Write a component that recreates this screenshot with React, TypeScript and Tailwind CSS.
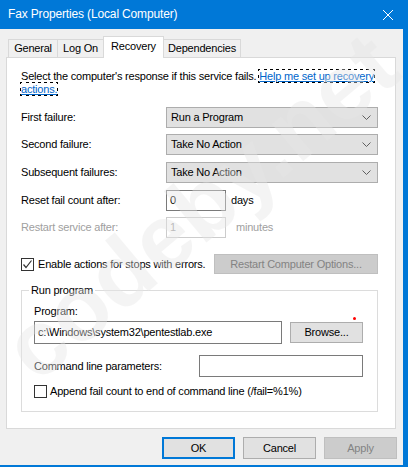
import React from "react";

const Chevron = () => (
  <svg width="9" height="5" viewBox="0 0 9 5" className="text-[#5f5f5f]">
    <path d="M0.5 0.5 L4.5 4.5 L8.5 0.5" fill="none" stroke="currentColor" strokeWidth="1" />
  </svg>
);

const Combo = ({ value }: { value: string }) => (
  <div className="flex h-[21px] w-[212px] items-center justify-between border border-[#adadad] bg-[#e1e1e1] pl-[4px] pr-[6px]">
    <span>{value}</span>
    <Chevron />
  </div>
);

const CheckBox = ({ checked }: { checked?: boolean }) => (
  <div className="flex h-[13px] w-[13px] shrink-0 items-center justify-center border border-[#333333] bg-white">
    {checked && (
      <svg width="11" height="11" viewBox="0 0 11 11">
        <path d="M1.5 5.5 L4 8.5 L9.5 1.5" fill="none" stroke="#333333" strokeWidth="1.2" />
      </svg>
    )}
  </div>
);

const Tab = ({ label, w, active }: { label: string; w: string; active?: boolean }) => (
  <div
    className={
      active
        ? `-ml-px flex h-[22px] items-start justify-center border border-b-0 border-[#d9d9d9] bg-white pt-[3px] ${w}`
        : `-ml-px mb-px flex h-[18px] items-center justify-center border border-b-0 border-[#d9d9d9] bg-[#f0f0f0] ${w}`
    }
  >
    {label}
  </div>
);

export default function App() {
  return (
    <div className="relative h-[467px] w-[408px] overflow-hidden border-b-2 border-r-[5px] border-[#0078d7] bg-[#f0f0f0] font-['Liberation_Sans',Arial,sans-serif] text-[11px] leading-[13px] tracking-[-0.2px] text-black">
      {/* title bar */}
      <div className="flex h-[29px] items-center justify-between bg-[#0078d7] pl-[8px] pr-[9px] text-white">
        <span className="text-[12px] tracking-[-0.15px]">Fax Properties (Local Computer)</span>
        <svg width="12" height="12" viewBox="0 0 12 12">
          <path d="M1 1 L11 11 M11 1 L1 11" stroke="white" strokeWidth="1" />
        </svg>
      </div>

      <div className="px-[6px]">
        {/* tabs */}
        <div className="relative z-10 mt-[7px] flex h-[22px] items-end pl-[3px]">
          <Tab label="General" w="w-[50px]" />
          <Tab label="Log On" w="w-[47px]" />
          <Tab label="Recovery" w="w-[61px]" active />
          <Tab label="Dependencies" w="w-[78px]" />
        </div>

        {/* panel */}
        <div className="-mt-px h-[372px] w-[390px] border border-[#d9d9d9] bg-white pl-[14px] pt-[12px]">
          <p className="whitespace-nowrap">
            Select the computer's response if this service fails.{" "}
            <span className="text-[#0066cc] underline outline-1 outline-dotted outline-black">
              Help me set up recovery
              <br />
              actions.
            </span>
          </p>

          <div className="mt-[11px] flex items-center">
            <span className="w-[145px]">First failure:</span>
            <Combo value="Run a Program" />
          </div>
          <div className="mt-[6px] flex items-center">
            <span className="w-[145px]">Second failure:</span>
            <Combo value="Take No Action" />
          </div>
          <div className="mt-[7px] flex items-center">
            <span className="w-[145px]">Subsequent failures:</span>
            <Combo value="Take No Action" />
          </div>
          <div className="mt-[7px] flex items-center">
            <span className="w-[145px]">Reset fail count after:</span>
            <div className="flex h-[21px] w-[60px] items-center border border-[#7a7a7a] bg-white pl-[3px]">0</div>
            <span className="ml-[5px]">days</span>
          </div>
          <div className="mt-[6px] flex items-center text-[#a0a0a0]">
            <span className="w-[145px]">Restart service after:</span>
            <div className="flex h-[21px] w-[60px] items-center border border-[#cccccc] bg-white pl-[3px]">1</div>
            <span className="ml-[10px]">minutes</span>
          </div>

          <div className="mt-[16px] flex w-[357px] items-center justify-between">
            <div className="flex items-center gap-[4px]">
              <CheckBox checked />
              <span>Enable actions for stops with errors.</span>
            </div>
            <div className="flex h-[20px] w-[164px] items-center justify-center border border-[#bfbfbf] bg-[#cccccc] text-[#838383]">
              Restart Computer Options...
            </div>
          </div>

          <fieldset className="mt-[10px] w-[357px] border border-[#dcdcdc] pb-[13px]">
            <legend className="ml-[7px] px-[2px]">Run program</legend>
            <div className="pl-[12px]">
              <div className="mt-[8px]">Program:</div>
              <div className="mt-[3px] flex items-center">
                <div className="flex h-[23px] w-[248px] items-center border border-[#7a7a7a] bg-white pl-[3px]">
                  c:\Windows\system32\pentestlab.exe
                </div>
                <div className="ml-[8px] flex h-[21px] w-[73px] items-center justify-center border border-[#adadad] bg-[#e1e1e1]">
                  Browse...
                </div>
              </div>
              <div className="mt-[11px] flex items-center">
                <span className="w-[165px]">Command line parameters:</span>
                <div className="h-[22px] w-[164px] border border-[#7a7a7a] bg-white" />
              </div>
              <div className="mt-[8px] flex items-center gap-[3px]">
                <CheckBox />
                <span>Append fail count to end of command line (/fail=%1%)</span>
              </div>
            </div>
          </fieldset>
        </div>

        {/* dialog buttons */}
        <div className="mt-[8px] flex justify-end gap-[8px]">
          <div className="flex h-[22px] w-[73px] items-center justify-center border-2 border-[#0078d7] bg-[#e1e1e1]">OK</div>
          <div className="flex h-[22px] w-[73px] items-center justify-center border border-[#adadad] bg-[#e1e1e1]">Cancel</div>
          <div className="flex h-[22px] w-[73px] items-center justify-center border border-[#bfbfbf] bg-[#cccccc] text-[#838383]">Apply</div>
        </div>
      </div>

      {/* red marker dot */}
      <div className="pointer-events-none absolute left-[353px] top-[317px] h-[3px] w-[3px] rounded-full bg-[#ff0000]" />

      {/* watermark */}
      <div className="pointer-events-none absolute left-[-45px] top-[160px] w-[490px] -rotate-[40deg] text-center text-[92px] font-bold leading-none tracking-normal text-[#e6e6e6] opacity-40">
        codeby.net
      </div>
    </div>
  );
}
